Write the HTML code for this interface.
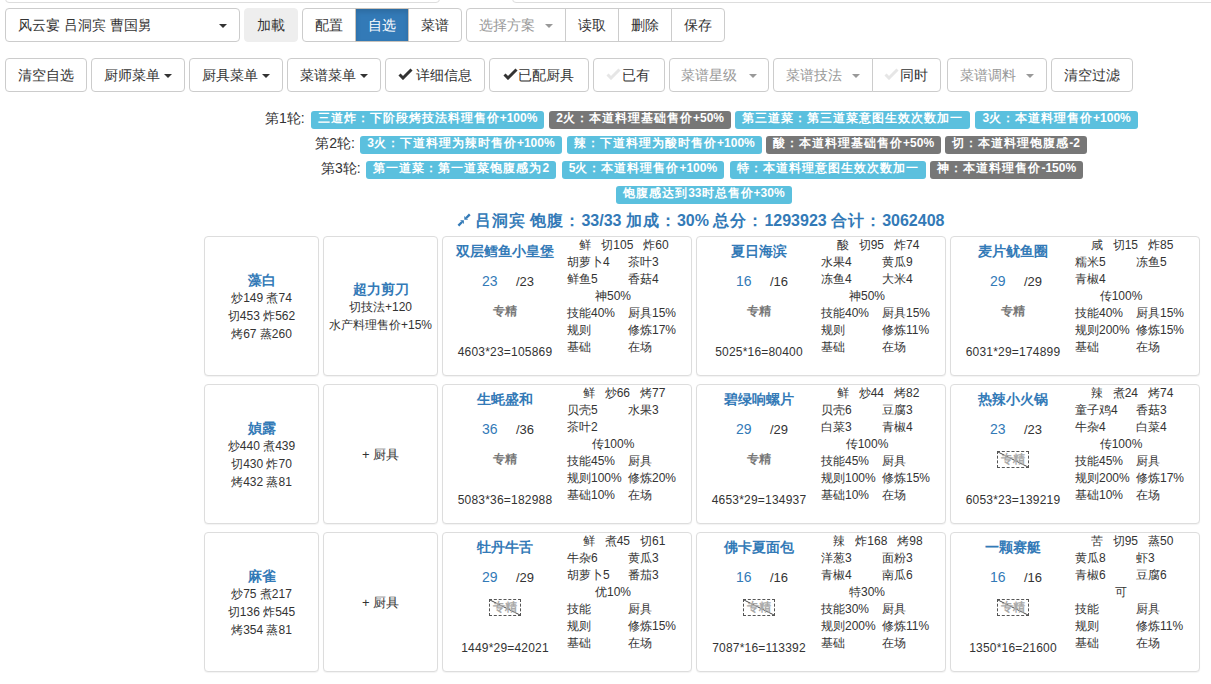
<!DOCTYPE html><html><head><meta charset="utf-8"><style>
*{margin:0;padding:0;box-sizing:border-box}
html,body{width:1211px;height:684px;overflow:hidden;background:#fff}
body{font-family:"Liberation Sans",sans-serif;font-size:12px;color:#333;position:relative}
.abs{position:absolute;white-space:nowrap}
.box{position:absolute;border:1px solid #ccc;border-radius:4px;background:#fff}
.btn{position:absolute;height:34px;border:1px solid #ccc;background:#fff;font-size:14px;line-height:32px;text-align:center;color:#333;white-space:nowrap}
.r{border-radius:4px}
.rl{border-radius:4px 0 0 4px}
.rr{border-radius:0 4px 4px 0}
.dis{color:#999}
.caret{display:inline-block;width:0;height:0;border-top:4px solid #333;border-left:4px solid transparent;border-right:4px solid transparent;vertical-align:middle}
.dis .caret{border-top-color:#999}
.lbl{position:absolute;height:18px;font-size:12px;font-weight:bold;color:#fff;line-height:15px;border-radius:3px;padding:0 7px;white-space:nowrap}
.li{background:#5bc0de}
.ld{background:#777}
.card{position:absolute;border:1px solid #ddd;border-radius:4px;background:#fff;height:140px;box-shadow:0 1px 1px rgba(0,0,0,.05)}
.c{position:absolute;left:0;right:0;text-align:center;white-space:nowrap;line-height:17px}
.nm{font-weight:bold;color:#337ab7;font-size:14px;line-height:20px}
.t{position:absolute;white-space:nowrap;line-height:17px}
.zj{font-weight:bold;color:#777}
.zjd{color:#aaa;font-weight:bold;border:1px dashed #555;display:inline-block;position:relative;line-height:15px;padding:0 3px}
</style></head><body>
<div class="box" style="left:5px;top:-40px;width:435px;height:43px;border-color:#ddd"></div>
<div class="box" style="left:512px;top:-40px;width:720px;height:43px;border-color:#ddd"></div>
<div class="btn r" style="left:5px;top:8px;width:235px;text-align:left;padding-left:12px">风云宴 吕洞宾 曹国舅<span class="caret" style="position:absolute;left:213px;top:15px"></span></div>
<div class="btn r" style="left:244px;top:8px;width:54px;background:#eee;border-color:#eee">加載</div>
<div class="btn rl" style="left:302px;top:8px;width:54px">配置</div>
<div class="btn" style="left:355px;top:8px;width:54px;background:#337ab7;border-color:#c9c2ba;color:#fff;z-index:2;box-shadow:inset 0 3px 5px rgba(0,0,0,.125)">自选</div>
<div class="btn rr" style="left:408px;top:8px;width:54px">菜谱</div>
<div class="btn rl dis" style="left:466px;top:8px;width:100px;text-align:left;padding-left:12px">选择方案<span class="caret" style="position:absolute;left:78px;top:15px"></span></div>
<div class="btn" style="left:565px;top:8px;width:54px">读取</div>
<div class="btn" style="left:618px;top:8px;width:54px">删除</div>
<div class="btn rr" style="left:671px;top:8px;width:54px">保存</div>
<div class="btn r" style="left:5px;top:58px;width:82px">清空自选</div>
<div class="btn r" style="left:91px;top:58px;width:94px">厨师菜单 <span class="caret"></span></div>
<div class="btn r" style="left:189px;top:58px;width:94px">厨具菜单 <span class="caret"></span></div>
<div class="btn r" style="left:287px;top:58px;width:94px">菜谱菜单 <span class="caret"></span></div>
<div class="btn r" style="left:385px;top:58px;width:100px;padding-left:17px">详细信息</div>
<svg class="abs" style="left:398px;top:68px" width="15" height="12" viewBox="0 0 15 12"><path d="M1.5 6.5 L5 10 L13.5 1.5" fill="none" stroke="#333" stroke-width="3"/></svg>
<div class="btn r" style="left:489px;top:58px;width:100px;padding-left:14px">已配厨具</div>
<svg class="abs" style="left:503px;top:68px" width="15" height="12" viewBox="0 0 15 12"><path d="M1.5 6.5 L5 10 L13.5 1.5" fill="none" stroke="#333" stroke-width="3"/></svg>
<div class="btn r" style="left:593px;top:58px;width:72px;padding-left:14px">已有</div>
<svg class="abs" style="left:606px;top:68px" width="15" height="12" viewBox="0 0 15 12"><path d="M1.5 6.5 L5 10 L13.5 1.5" fill="none" stroke="#e6e6e6" stroke-width="3"/></svg>
<div class="btn r dis" style="left:669px;top:58px;width:100px">菜谱星级 &nbsp; <span class="caret"></span></div>
<div class="btn rl dis" style="left:773px;top:58px;width:100px">菜谱技法 &nbsp; <span class="caret" style="margin-left:-1px"></span></div>
<div class="btn rr" style="left:872px;top:58px;width:69px;padding-left:14px">同时</div>
<svg class="abs" style="left:884px;top:68px" width="15" height="12" viewBox="0 0 15 12"><path d="M1.5 6.5 L5 10 L13.5 1.5" fill="none" stroke="#e6e6e6" stroke-width="3"/></svg>
<div class="btn r dis" style="left:947px;top:58px;width:100px">菜谱调料 &nbsp; <span class="caret" style="margin-left:-1px"></span></div>
<div class="btn r" style="left:1051px;top:58px;width:82px">清空过滤</div>
<div class="abs" style="left:265px;top:107px;font-size:14px;line-height:22px">第1轮:</div>
<div class="lbl li" style="left:310.7px;top:111px;letter-spacing:1px">三道炸：下阶段烤技法料理售价<span style="letter-spacing:0">+100%</span></div>
<div class="lbl ld" style="left:549.3px;top:111px;letter-spacing:1px"><span style="letter-spacing:0">2</span>火：本道料理基础售价<span style="letter-spacing:0">+50%</span></div>
<div class="lbl li" style="left:735.1px;top:111px;letter-spacing:1px">第三道菜：第三道菜意图生效次数加一</div>
<div class="lbl li" style="left:975.4px;top:111px;letter-spacing:1px"><span style="letter-spacing:0">3</span>火：本道料理售价<span style="letter-spacing:0">+100%</span></div>
<div class="abs" style="left:315.3px;top:132px;font-size:14px;line-height:22px">第2轮:</div>
<div class="lbl li" style="left:360.2px;top:136px;letter-spacing:1px"><span style="letter-spacing:0">3</span>火：下道料理为辣时售价<span style="letter-spacing:0">+100%</span></div>
<div class="lbl li" style="left:567.1px;top:136px;letter-spacing:1px">辣：下道料理为酸时售价<span style="letter-spacing:0">+100%</span></div>
<div class="lbl ld" style="left:766.1px;top:136px;letter-spacing:1px">酸：本道料理基础售价<span style="letter-spacing:0">+50%</span></div>
<div class="lbl ld" style="left:945.3px;top:136px;letter-spacing:1px">切：本道料理饱腹感<span style="letter-spacing:0">-2</span></div>
<div class="abs" style="left:321px;top:157px;font-size:14px;line-height:22px">第3轮:</div>
<div class="lbl li" style="left:366.4px;top:161px;letter-spacing:1px">第一道菜：第一道菜饱腹感为<span style="letter-spacing:0">2</span></div>
<div class="lbl li" style="left:561.7px;top:161px;letter-spacing:1px"><span style="letter-spacing:0">5</span>火：本道料理售价<span style="letter-spacing:0">+100%</span></div>
<div class="lbl li" style="left:729.7px;top:161px;letter-spacing:1px">特：本道料理意图生效次数加一</div>
<div class="lbl ld" style="left:930.4px;top:161px;letter-spacing:1px">神：本道料理售价<span style="letter-spacing:0">-150%</span></div>
<div class="lbl li" style="left:616.2px;top:186px;letter-spacing:1px">饱腹感达到<span style="letter-spacing:0">33</span>时总售价<span style="letter-spacing:0">+30%</span></div>
<svg class="abs" style="left:457px;top:213px" width="14" height="14" viewBox="0 0 14 14"><path d="M12.8 1.4 L9.2 5" stroke="#337ab7" stroke-width="2.4"/><path d="M7.3 6.8 L7.3 3 L11.1 6.8 Z" fill="#337ab7"/><path d="M1.4 12.6 L5 9" stroke="#337ab7" stroke-width="2.4"/><path d="M6.9 7.2 L3.1 7.2 L6.9 11 Z" fill="#337ab7"/></svg>
<div class="abs" style="left:475px;top:210px;font-size:16px;line-height:22px;font-weight:bold;color:#337ab7;letter-spacing:1px">吕洞宾<span style="letter-spacing:0"> </span>饱腹：<span style="letter-spacing:0">33/33 </span>加成：<span style="letter-spacing:0">30% </span>总分：<span style="letter-spacing:0">1293923 </span>合计：<span style="letter-spacing:0">3062408</span></div>
<div class="card" style="left:204px;top:236px;width:115px">
<div class="c nm" style="top:33px">藻白</div>
<div class="c" style="top:52px;line-height:18px">炒149 煮74</div>
<div class="c" style="top:70px;line-height:18px">切453 炸562</div>
<div class="c" style="top:88px;line-height:18px">烤67 蒸260</div>
</div>
<div class="card" style="left:323px;top:236px;width:115px">
<div class="c nm" style="top:42px">超力剪刀</div>
<div class="c" style="top:61px;line-height:18px">切技法+120</div>
<div class="c" style="top:79px;line-height:18px">水产料理售价+15%</div>
</div>
<div class="card" style="left:442px;top:236px;width:250px">
<div class="t nm" style="left:0;width:124px;text-align:center;top:6px">双层鳕鱼小皇堡</div>
<div class="t" style="left:39px;top:36px;font-size:14px;color:#337ab7">23</div>
<div class="t" style="left:73px;top:36px;font-size:13px">/23</div>
<div class="t zj" style="left:0;width:124px;text-align:center;top:66px">专精</div>
<div class="t" style="left:-1px;width:126px;text-align:center;top:107px;letter-spacing:0.2px">4603*23=105869</div>
<div class="t" style="left:131px;width:100px;text-align:center;top:0px"><span style="margin:0 5px">鲜</span><span style="margin:0 5px">切105</span><span style="margin:0 5px">炸60</span></div>
<div class="t" style="left:124px;top:17px">胡萝卜4</div>
<div class="t" style="left:185px;top:17px">茶叶3</div>
<div class="t" style="left:124px;top:34px">鲜鱼5</div>
<div class="t" style="left:185px;top:34px">香菇4</div>
<div class="t" style="left:120px;width:100px;text-align:center;top:51px">神50%</div>
<div class="t" style="left:124px;top:68px">技能40%</div>
<div class="t" style="left:185px;top:68px">厨具15%</div>
<div class="t" style="left:124px;top:85px">规则</div>
<div class="t" style="left:185px;top:85px">修炼17%</div>
<div class="t" style="left:124px;top:102px">基础</div>
<div class="t" style="left:185px;top:102px">在场</div>
</div>
<div class="card" style="left:696px;top:236px;width:250px">
<div class="t nm" style="left:0;width:124px;text-align:center;top:6px">夏日海滨</div>
<div class="t" style="left:39px;top:36px;font-size:14px;color:#337ab7">16</div>
<div class="t" style="left:73px;top:36px;font-size:13px">/16</div>
<div class="t zj" style="left:0;width:124px;text-align:center;top:66px">专精</div>
<div class="t" style="left:-1px;width:126px;text-align:center;top:107px;letter-spacing:0.2px">5025*16=80400</div>
<div class="t" style="left:131px;width:100px;text-align:center;top:0px"><span style="margin:0 5px">酸</span><span style="margin:0 5px">切95</span><span style="margin:0 5px">炸74</span></div>
<div class="t" style="left:124px;top:17px">水果4</div>
<div class="t" style="left:185px;top:17px">黄瓜9</div>
<div class="t" style="left:124px;top:34px">冻鱼4</div>
<div class="t" style="left:185px;top:34px">大米4</div>
<div class="t" style="left:120px;width:100px;text-align:center;top:51px">神50%</div>
<div class="t" style="left:124px;top:68px">技能40%</div>
<div class="t" style="left:185px;top:68px">厨具15%</div>
<div class="t" style="left:124px;top:85px">规则</div>
<div class="t" style="left:185px;top:85px">修炼11%</div>
<div class="t" style="left:124px;top:102px">基础</div>
<div class="t" style="left:185px;top:102px">在场</div>
</div>
<div class="card" style="left:950px;top:236px;width:250px">
<div class="t nm" style="left:0;width:124px;text-align:center;top:6px">麦片鱿鱼圈</div>
<div class="t" style="left:39px;top:36px;font-size:14px;color:#337ab7">29</div>
<div class="t" style="left:73px;top:36px;font-size:13px">/29</div>
<div class="t zj" style="left:0;width:124px;text-align:center;top:66px">专精</div>
<div class="t" style="left:-1px;width:126px;text-align:center;top:107px;letter-spacing:0.2px">6031*29=174899</div>
<div class="t" style="left:131px;width:100px;text-align:center;top:0px"><span style="margin:0 5px">咸</span><span style="margin:0 5px">切15</span><span style="margin:0 5px">炸85</span></div>
<div class="t" style="left:124px;top:17px">糯米5</div>
<div class="t" style="left:185px;top:17px">冻鱼5</div>
<div class="t" style="left:124px;top:34px">青椒4</div>
<div class="t" style="left:120px;width:100px;text-align:center;top:51px">传100%</div>
<div class="t" style="left:124px;top:68px">技能40%</div>
<div class="t" style="left:185px;top:68px">厨具15%</div>
<div class="t" style="left:124px;top:85px">规则200%</div>
<div class="t" style="left:185px;top:85px">修炼15%</div>
<div class="t" style="left:124px;top:102px">基础</div>
<div class="t" style="left:185px;top:102px">在场</div>
</div>
<div class="card" style="left:204px;top:384px;width:115px">
<div class="c nm" style="top:33px">媜露</div>
<div class="c" style="top:52px;line-height:18px">炒440 煮439</div>
<div class="c" style="top:70px;line-height:18px">切430 炸70</div>
<div class="c" style="top:88px;line-height:18px">烤432 蒸81</div>
</div>
<div class="card" style="left:323px;top:384px;width:115px">
<div class="c" style="top:61px;font-size:13px;line-height:18px">+ 厨具</div>
</div>
<div class="card" style="left:442px;top:384px;width:250px">
<div class="t nm" style="left:0;width:124px;text-align:center;top:6px">生蚝盛和</div>
<div class="t" style="left:39px;top:36px;font-size:14px;color:#337ab7">36</div>
<div class="t" style="left:73px;top:36px;font-size:13px">/36</div>
<div class="t zj" style="left:0;width:124px;text-align:center;top:66px">专精</div>
<div class="t" style="left:-1px;width:126px;text-align:center;top:107px;letter-spacing:0.2px">5083*36=182988</div>
<div class="t" style="left:131px;width:100px;text-align:center;top:0px"><span style="margin:0 5px">鲜</span><span style="margin:0 5px">炒66</span><span style="margin:0 5px">烤77</span></div>
<div class="t" style="left:124px;top:17px">贝壳5</div>
<div class="t" style="left:185px;top:17px">水果3</div>
<div class="t" style="left:124px;top:34px">茶叶2</div>
<div class="t" style="left:120px;width:100px;text-align:center;top:51px">传100%</div>
<div class="t" style="left:124px;top:68px">技能45%</div>
<div class="t" style="left:185px;top:68px">厨具</div>
<div class="t" style="left:124px;top:85px">规则100%</div>
<div class="t" style="left:185px;top:85px">修炼20%</div>
<div class="t" style="left:124px;top:102px">基础10%</div>
<div class="t" style="left:185px;top:102px">在场</div>
</div>
<div class="card" style="left:696px;top:384px;width:250px">
<div class="t nm" style="left:0;width:124px;text-align:center;top:6px">碧绿响螺片</div>
<div class="t" style="left:39px;top:36px;font-size:14px;color:#337ab7">29</div>
<div class="t" style="left:73px;top:36px;font-size:13px">/29</div>
<div class="t zj" style="left:0;width:124px;text-align:center;top:66px">专精</div>
<div class="t" style="left:-1px;width:126px;text-align:center;top:107px;letter-spacing:0.2px">4653*29=134937</div>
<div class="t" style="left:131px;width:100px;text-align:center;top:0px"><span style="margin:0 5px">鲜</span><span style="margin:0 5px">炒44</span><span style="margin:0 5px">烤82</span></div>
<div class="t" style="left:124px;top:17px">贝壳6</div>
<div class="t" style="left:185px;top:17px">豆腐3</div>
<div class="t" style="left:124px;top:34px">白菜3</div>
<div class="t" style="left:185px;top:34px">青椒4</div>
<div class="t" style="left:120px;width:100px;text-align:center;top:51px">传100%</div>
<div class="t" style="left:124px;top:68px">技能45%</div>
<div class="t" style="left:185px;top:68px">厨具</div>
<div class="t" style="left:124px;top:85px">规则100%</div>
<div class="t" style="left:185px;top:85px">修炼15%</div>
<div class="t" style="left:124px;top:102px">基础10%</div>
<div class="t" style="left:185px;top:102px">在场</div>
</div>
<div class="card" style="left:950px;top:384px;width:250px">
<div class="t nm" style="left:0;width:124px;text-align:center;top:6px">热辣小火锅</div>
<div class="t" style="left:39px;top:36px;font-size:14px;color:#337ab7">23</div>
<div class="t" style="left:73px;top:36px;font-size:13px">/23</div>
<div class="t" style="left:0;width:124px;text-align:center;top:66px"><span class="zjd"><svg style="position:absolute;left:0;top:0" width="30" height="15"><line x1="0" y1="0" x2="30" y2="15" stroke="#444" stroke-width="1"/></svg><span style="position:relative">专精</span></span></div>
<div class="t" style="left:-1px;width:126px;text-align:center;top:107px;letter-spacing:0.2px">6053*23=139219</div>
<div class="t" style="left:131px;width:100px;text-align:center;top:0px"><span style="margin:0 5px">辣</span><span style="margin:0 5px">煮24</span><span style="margin:0 5px">烤74</span></div>
<div class="t" style="left:124px;top:17px">童子鸡4</div>
<div class="t" style="left:185px;top:17px">香菇3</div>
<div class="t" style="left:124px;top:34px">牛杂4</div>
<div class="t" style="left:185px;top:34px">白菜4</div>
<div class="t" style="left:120px;width:100px;text-align:center;top:51px">传100%</div>
<div class="t" style="left:124px;top:68px">技能45%</div>
<div class="t" style="left:185px;top:68px">厨具</div>
<div class="t" style="left:124px;top:85px">规则200%</div>
<div class="t" style="left:185px;top:85px">修炼17%</div>
<div class="t" style="left:124px;top:102px">基础10%</div>
<div class="t" style="left:185px;top:102px">在场</div>
</div>
<div class="card" style="left:204px;top:532px;width:115px">
<div class="c nm" style="top:33px">麻雀</div>
<div class="c" style="top:52px;line-height:18px">炒75 煮217</div>
<div class="c" style="top:70px;line-height:18px">切136 炸545</div>
<div class="c" style="top:88px;line-height:18px">烤354 蒸81</div>
</div>
<div class="card" style="left:323px;top:532px;width:115px">
<div class="c" style="top:61px;font-size:13px;line-height:18px">+ 厨具</div>
</div>
<div class="card" style="left:442px;top:532px;width:250px">
<div class="t nm" style="left:0;width:124px;text-align:center;top:6px">牡丹牛舌</div>
<div class="t" style="left:39px;top:36px;font-size:14px;color:#337ab7">29</div>
<div class="t" style="left:73px;top:36px;font-size:13px">/29</div>
<div class="t" style="left:0;width:124px;text-align:center;top:66px"><span class="zjd"><svg style="position:absolute;left:0;top:0" width="30" height="15"><line x1="0" y1="0" x2="30" y2="15" stroke="#444" stroke-width="1"/></svg><span style="position:relative">专精</span></span></div>
<div class="t" style="left:-1px;width:126px;text-align:center;top:107px;letter-spacing:0.2px">1449*29=42021</div>
<div class="t" style="left:131px;width:100px;text-align:center;top:0px"><span style="margin:0 5px">鲜</span><span style="margin:0 5px">煮45</span><span style="margin:0 5px">切61</span></div>
<div class="t" style="left:124px;top:17px">牛杂6</div>
<div class="t" style="left:185px;top:17px">黄瓜3</div>
<div class="t" style="left:124px;top:34px">胡萝卜5</div>
<div class="t" style="left:185px;top:34px">番茄3</div>
<div class="t" style="left:120px;width:100px;text-align:center;top:51px">优10%</div>
<div class="t" style="left:124px;top:68px">技能</div>
<div class="t" style="left:185px;top:68px">厨具</div>
<div class="t" style="left:124px;top:85px">规则</div>
<div class="t" style="left:185px;top:85px">修炼15%</div>
<div class="t" style="left:124px;top:102px">基础</div>
<div class="t" style="left:185px;top:102px">在场</div>
</div>
<div class="card" style="left:696px;top:532px;width:250px">
<div class="t nm" style="left:0;width:124px;text-align:center;top:6px">佛卡夏面包</div>
<div class="t" style="left:39px;top:36px;font-size:14px;color:#337ab7">16</div>
<div class="t" style="left:73px;top:36px;font-size:13px">/16</div>
<div class="t" style="left:0;width:124px;text-align:center;top:66px"><span class="zjd"><svg style="position:absolute;left:0;top:0" width="30" height="15"><line x1="0" y1="0" x2="30" y2="15" stroke="#444" stroke-width="1"/></svg><span style="position:relative">专精</span></span></div>
<div class="t" style="left:-1px;width:126px;text-align:center;top:107px;letter-spacing:0.2px">7087*16=113392</div>
<div class="t" style="left:131px;width:100px;text-align:center;top:0px"><span style="margin:0 5px">辣</span><span style="margin:0 5px">炸168</span><span style="margin:0 5px">烤98</span></div>
<div class="t" style="left:124px;top:17px">洋葱3</div>
<div class="t" style="left:185px;top:17px">面粉3</div>
<div class="t" style="left:124px;top:34px">青椒4</div>
<div class="t" style="left:185px;top:34px">南瓜6</div>
<div class="t" style="left:120px;width:100px;text-align:center;top:51px">特30%</div>
<div class="t" style="left:124px;top:68px">技能30%</div>
<div class="t" style="left:185px;top:68px">厨具</div>
<div class="t" style="left:124px;top:85px">规则200%</div>
<div class="t" style="left:185px;top:85px">修炼11%</div>
<div class="t" style="left:124px;top:102px">基础</div>
<div class="t" style="left:185px;top:102px">在场</div>
</div>
<div class="card" style="left:950px;top:532px;width:250px">
<div class="t nm" style="left:0;width:124px;text-align:center;top:6px">一颗赛艇</div>
<div class="t" style="left:39px;top:36px;font-size:14px;color:#337ab7">16</div>
<div class="t" style="left:73px;top:36px;font-size:13px">/16</div>
<div class="t" style="left:0;width:124px;text-align:center;top:66px"><span class="zjd"><svg style="position:absolute;left:0;top:0" width="30" height="15"><line x1="0" y1="0" x2="30" y2="15" stroke="#444" stroke-width="1"/></svg><span style="position:relative">专精</span></span></div>
<div class="t" style="left:-1px;width:126px;text-align:center;top:107px;letter-spacing:0.2px">1350*16=21600</div>
<div class="t" style="left:131px;width:100px;text-align:center;top:0px"><span style="margin:0 5px">苦</span><span style="margin:0 5px">切95</span><span style="margin:0 5px">蒸50</span></div>
<div class="t" style="left:124px;top:17px">黄瓜8</div>
<div class="t" style="left:185px;top:17px">虾3</div>
<div class="t" style="left:124px;top:34px">青椒6</div>
<div class="t" style="left:185px;top:34px">豆腐6</div>
<div class="t" style="left:120px;width:100px;text-align:center;top:51px">可</div>
<div class="t" style="left:124px;top:68px">技能</div>
<div class="t" style="left:185px;top:68px">厨具</div>
<div class="t" style="left:124px;top:85px">规则</div>
<div class="t" style="left:185px;top:85px">修炼11%</div>
<div class="t" style="left:124px;top:102px">基础</div>
<div class="t" style="left:185px;top:102px">在场</div>
</div>
</body></html>
